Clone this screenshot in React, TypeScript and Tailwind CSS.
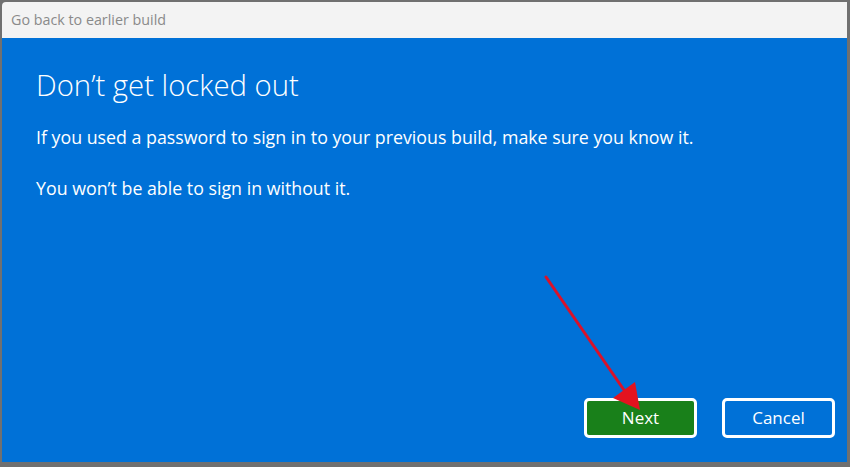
export default function App() {
  return (
    <div className="h-[467px] w-[850px] bg-[#707070] pl-[2px] pt-[2px] pr-[3px] pb-[5px] flex flex-col" style={{ fontFamily: '"Open Sans", "Noto Sans", sans-serif' }}>
      {/* title bar */}
      <div className="h-[36px] bg-[#f3f3f3] flex items-center pl-[9px] rounded-tl-[4px]">
        <span className="text-[14.3px] text-[#8a8a8a]">Go back to earlier build</span>
      </div>

      {/* body */}
      <div className="relative flex-1 bg-[#0071d7] flex flex-col">
        <div className="pl-[34px] pt-[28px] text-white">
          <h1 className="text-[29.3px] font-light leading-[38px]">Don’t get locked out</h1>
          <p className="mt-[21px] text-[17.8px] leading-[24px]">
            If you used a password to sign in to your previous build, make sure you know it.
          </p>
          <p className="mt-[27px] text-[17.8px] leading-[24px]">
            You won’t be able to sign in without it.
          </p>
        </div>

        <div className="mt-auto flex justify-end gap-[25px] pr-[12px] pb-[24px]">
          <button className="w-[113px] h-[40px] rounded-[5px] border-[3px] border-white bg-[#19801a] text-white text-[17px]">
            Next
          </button>
          <button className="w-[113px] h-[40px] rounded-[5px] border-[3px] border-white bg-transparent text-white text-[17px]">
            Cancel
          </button>
        </div>

        {/* annotation arrow */}
        <svg className="absolute left-0 top-0 pointer-events-none" width="845" height="424" viewBox="0 38 845 424">
          <line x1="544" y1="277" x2="622" y2="390" stroke="#d9122a" strokeWidth="3" strokeLinecap="round" />
          <polygon points="611,398 633,382 638,410" fill="#e3131f" />
        </svg>
      </div>
    </div>
  )
}
